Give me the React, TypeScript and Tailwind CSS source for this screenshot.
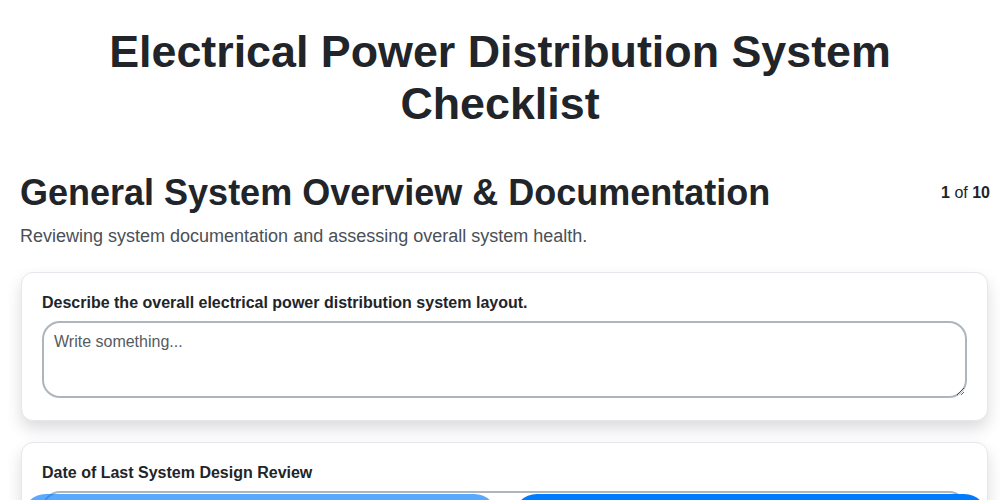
export default function App() {
  return (
    <div className="min-h-screen bg-white text-[#212529]" style={{ fontFamily: '"Liberation Sans", Arial, sans-serif' }}>
      <h1 className="px-5 pt-[25px] text-center text-[44.8px] leading-[52px] font-bold">
        Electrical Power Distribution System
        <br />
        Checklist
      </h1>

      <div className="pl-5 pr-[10px] pb-24">
        <div className="mt-[42px] flex items-center justify-between">
          <h2 className="text-[36px] leading-[43px] font-bold">General System Overview &amp; Documentation</h2>
          <div className="text-base text-[#212529]">
            <span className="font-bold">1</span> of <span className="font-bold">10</span>
          </div>
        </div>
        <p className="mt-[9px] text-[18px] leading-[27px] text-[#495057]">
          Reviewing system documentation and assessing overall system health.
        </p>

        <div className="mt-[22px] ml-px mr-[2px] flex flex-col gap-[21px]">
          <div className="rounded-xl border border-[#e6e6ec] bg-white px-5 pt-[18px] pb-[22px] shadow-[0_8px_16px_rgba(0,0,0,0.14)]">
            <label className="mb-[6px] block text-base leading-6 font-bold">
              Describe the overall electrical power distribution system layout.
            </label>
            <textarea
              placeholder="Write something..."
              className="block h-[77px] w-full rounded-[18px] border-2 border-[#adb5bd] px-[10px] py-[7px] text-base placeholder:text-[#555b61] outline-none"
            />
          </div>

          <div className="rounded-xl border border-[#e6e6ec] bg-white px-5 pt-[18px] pb-[22px] shadow-[0_8px_16px_rgba(0,0,0,0.14)]">
            <label className="mb-[6px] block text-base leading-6 font-bold">Date of Last System Design Review</label>
            <input
              type="date"
              className="block h-[48px] w-full rounded-[18px] border-2 border-[#adb5bd] px-[10px] text-base outline-none"
            />
          </div>
        </div>
      </div>

      <div className="fixed inset-x-0 top-[494px] flex gap-[15px] pl-[22px] pr-[12px]">
        <button disabled className="h-12 flex-1 rounded-full bg-[#007bff] text-base font-bold text-white opacity-65">
          Previous
        </button>
        <button className="h-12 flex-1 rounded-full bg-[#007bff] text-base font-bold text-white">Next</button>
      </div>
    </div>
  );
}
